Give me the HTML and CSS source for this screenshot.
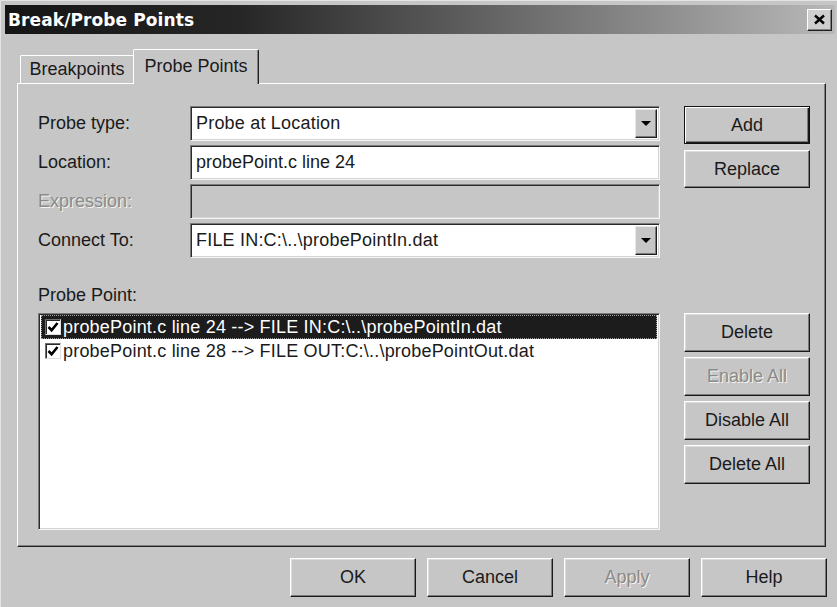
FILE: index.html
```html
<!DOCTYPE html>
<html lang="en">
<head>
<meta charset="utf-8">
<title>Break/Probe Points</title>
<link rel="stylesheet" href="styles.css">
</head>
<body>
<div class="window">
  <div class="titlebar">
    <span class="title">Break/Probe Points</span>
    <button class="close" aria-label="Close">
      <svg width="13" height="11" viewBox="0 0 13 11"><path d="M2 1.5 L11 9.5 M11 1.5 L2 9.5" stroke="#000" stroke-width="2.4" fill="none"/></svg>
    </button>
  </div>

  <div class="client">
    <div class="tabs">
      <div class="tab">Breakpoints</div>
      <div class="tab active">Probe Points</div>
    </div>

    <div class="panel">
      <div class="upper">
        <div class="form">
          <span class="lbl">Probe type:</span>
          <div class="field combo">
            <span class="val">Probe at Location</span>
            <span class="drop"><svg width="10" height="5" viewBox="0 0 10 5"><path d="M0 0 H10 L5 5 Z" fill="#000"/></svg></span>
          </div>

          <span class="lbl">Location:</span>
          <div class="field"><span class="val">probePoint.c line 24</span></div>

          <span class="lbl disabled">Expression:</span>
          <div class="field off"></div>

          <span class="lbl">Connect To:</span>
          <div class="field combo">
            <span class="val">FILE IN:C:\..\probePointIn.dat</span>
            <span class="drop"><svg width="10" height="5" viewBox="0 0 10 5"><path d="M0 0 H10 L5 5 Z" fill="#000"/></svg></span>
          </div>
        </div>
        <div class="actions top-actions">
          <button class="btn default">Add</button>
          <button class="btn">Replace</button>
        </div>
      </div>

      <div class="caption">Probe Point:</div>

      <div class="lower">
        <ul class="list">
          <li class="item selected">
            <span class="check"><svg width="12" height="12" viewBox="0 0 12 12"><path d="M1.5 6 L4.6 9.2 L10.5 2" stroke="#000" stroke-width="2.6" fill="none"/></svg></span>
            <span>probePoint.c line 24 --&gt; FILE IN:C:\..\probePointIn.dat</span>
          </li>
          <li class="item">
            <span class="check"><svg width="12" height="12" viewBox="0 0 12 12"><path d="M1.5 6 L4.6 9.2 L10.5 2" stroke="#000" stroke-width="2.6" fill="none"/></svg></span>
            <span>probePoint.c line 28 --&gt; FILE OUT:C:\..\probePointOut.dat</span>
          </li>
        </ul>
        <div class="actions list-actions">
          <button class="btn">Delete</button>
          <button class="btn" disabled>Enable All</button>
          <button class="btn">Disable All</button>
          <button class="btn">Delete All</button>
        </div>
      </div>
    </div>

    <div class="footer">
      <button class="btn">OK</button>
      <button class="btn">Cancel</button>
      <button class="btn" disabled>Apply</button>
      <button class="btn">Help</button>
    </div>
  </div>
</div>
</body>
</html>
```

FILE: styles.css
```css
* { box-sizing: border-box; }

html, body {
  margin: 0;
  width: 837px;
  height: 607px;
  overflow: hidden;
  background: #c6c6c6;
}

body {
  font-family: "Liberation Sans", Arial, sans-serif;
  font-size: 18px;
  color: #1a1a1a;
}

/* dialog frame */
.window {
  width: 837px;
  height: 607px;
  padding: 5px 2px 0 5px;
  background: #c6c6c6;
  box-shadow: inset 1px 1px #e4e4e4;
  display: flex;
  flex-direction: column;
}

.titlebar {
  height: 29px;
  flex: none;
  display: flex;
  align-items: center;
  justify-content: space-between;
  padding: 0 3px;
  background: linear-gradient(to right, #151515 0%, #262626 28%, #b8b8b8 100%);
}

.title {
  font-family: "DejaVu Sans", Verdana, sans-serif;
  font-weight: bold;
  font-size: 17px;
  color: #fff;
  letter-spacing: 0.1px;
}

.close {
  width: 25px;
  height: 22px;
  padding: 0;
  display: flex;
  align-items: center;
  justify-content: center;
  background: #cecece;
  border: 1px solid;
  border-color: #fff #202020 #202020 #fff;
  box-shadow: inset -1px -1px #808080;
}

.client {
  flex: 1;
  display: flex;
  flex-direction: column;
  padding: 15px 9px 0 12px;
}

/* tab strip */
.tabs {
  height: 34px;
  flex: none;
  display: flex;
  align-items: flex-end;
}

.tab {
  margin-left: 3px;
  width: 113px;
  height: 28px;
  display: flex;
  align-items: center;
  justify-content: center;
  border-top: 1px solid #fff;
  border-left: 1px solid #fff;
  border-radius: 2px 0 0 0;
}

.tab.active {
  margin-left: 0;
  width: 126px;
  height: 35px;
  margin-bottom: -1px;
  position: relative;
  z-index: 1;
  background: #c6c6c6;
  border-right: 1px solid #202020;
  box-shadow: inset -1px 0 #808080;
  border-radius: 2px 2px 0 0;
  padding-bottom: 1px;
}

/* property page */
.panel {
  width: 809px;
  height: 464px;
  flex: none;
  display: flex;
  flex-direction: column;
  padding: 22px 15px 16px 20px;
  border: 1px solid;
  border-color: #fff #202020 #202020 #fff;
  box-shadow: inset -1px -1px #808080;
}

.upper {
  display: flex;
  gap: 24px;
  flex: none;
}

.form {
  display: grid;
  grid-template-columns: 152px 470px;
  grid-auto-rows: 35px;
  row-gap: 4px;
  align-items: center;
}

.lbl.disabled {
  color: #8a8a8a;
  text-shadow: 1px 1px #f2f2f2;
}

.field {
  height: 35px;
  display: flex;
  align-items: center;
  padding: 0 2px 0 5px;
  background: #fff;
  border: 1px solid;
  border-color: #7a7a7a #f6f6f6 #f6f6f6 #7a7a7a;
  box-shadow: inset 1px 1px #2a2a2a, inset -1px -1px #d4d4d4;
}

.field.off { background: #c6c6c6; }

.val {
  flex: 1;
  white-space: nowrap;
}

.combo .val { letter-spacing: 0.2px; }

.drop {
  width: 22px;
  height: 29px;
  display: flex;
  align-items: center;
  justify-content: center;
  background: #c6c6c6;
  border: 1px solid;
  border-color: #e8e8e8 #1e1e1e #1e1e1e #e8e8e8;
  box-shadow: inset -1px -1px #7a7a7a;
}

.actions {
  width: 126px;
  flex: none;
  display: flex;
  flex-direction: column;
}

.top-actions { gap: 6px; }
.top-actions .btn { height: 38px; }

.list-actions { gap: 5px; }
.list-actions .btn { height: 39px; }

.caption {
  margin-top: 27px;
  height: 20px;
  line-height: 20px;
  margin-bottom: 8px;
  flex: none;
}

.lower {
  flex: 1;
  display: flex;
  gap: 24px;
}

.list {
  width: 622px;
  margin: 0;
  padding: 1px 2px;
  list-style: none;
  background: #fff;
  border: 1px solid;
  border-color: #7a7a7a #f6f6f6 #f6f6f6 #7a7a7a;
  box-shadow: inset 1px 1px #2a2a2a, inset -1px -1px #d4d4d4;
}

.item {
  height: 24px;
  display: flex;
  align-items: center;
  padding-left: 4px;
  gap: 2px;
  white-space: nowrap;
  letter-spacing: 0.2px;
}

.item.selected {
  background: #1c1c1c;
  color: #fff;
  outline: 1px dotted #9c9c9c;
  outline-offset: -1px;
}

.check {
  width: 16px;
  height: 16px;
  flex: none;
  display: flex;
  align-items: center;
  justify-content: center;
  background: #fff;
  border: 1px solid;
  border-color: #6e6e6e #e0e0e0 #e0e0e0 #6e6e6e;
  box-shadow: inset 1px 1px #2a2a2a;
}

/* push buttons */
.btn {
  width: 126px;
  height: 39px;
  padding: 0;
  font: inherit;
  color: #1a1a1a;
  background: #c6c6c6;
  border: 1px solid;
  border-color: #fff #1a1a1a #1a1a1a #fff;
  box-shadow: inset -1px -1px #7a7a7a, inset 1px 1px #dcdcdc;
}

.btn.default {
  border-color: #111;
  box-shadow: inset 1px 1px #fff, inset -1px -1px #1a1a1a, inset -2px -2px #7a7a7a;
}

.btn:disabled {
  color: #8a8a8a;
  text-shadow: 1px 1px #f4f4f4;
}

.footer {
  display: flex;
  justify-content: flex-end;
  gap: 11px;
  padding-top: 11px;
  margin-right: -1px;
}
```
